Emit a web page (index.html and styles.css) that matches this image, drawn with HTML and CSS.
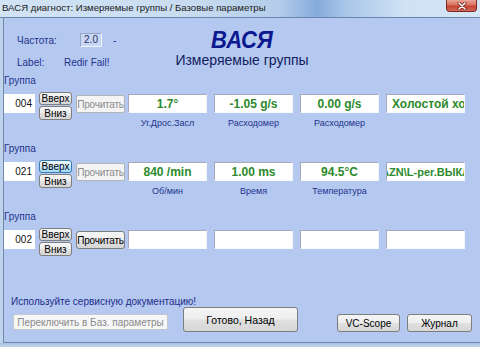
FILE: index.html
```html
<!DOCTYPE html>
<html lang="ru">
<head>
<meta charset="utf-8">
<title>ВАСЯ диагност</title>
<link rel="stylesheet" href="styles.css">
</head>
<body>
<div class="window">
  <div class="titlebar">
    <span class="title">ВАСЯ диагност: Измеряемые группы / Базовые параметры</span>
    <span class="close"><svg width="12" height="8" viewBox="0 0 12 8"><path d="M3 1 L9 7 M9 1 L3 7" stroke="#6a1a10" stroke-width="3" stroke-linecap="round"/><path d="M3 1 L9 7 M9 1 L3 7" stroke="#ffffff" stroke-width="1.6" stroke-linecap="round"/></svg></span>
  </div>
  <div class="frame">
    <div class="client">
      <header class="head">
        <div class="info">
          <div class="info-row"><span class="lbl lbl-freq">Частота:</span><span class="freq">2.0</span><span class="dash">-</span></div>
          <div class="info-row"><span class="lbl lbl-label">Label:</span><span class="lbl">Redir Fail!</span></div>
        </div>
        <div class="heading">
          <div class="brand">ВАСЯ</div>
          <div class="subtitle">Измеряемые группы</div>
        </div>
        <div class="spacer"></div>
      </header>

      <section class="group">
        <div class="group-label">Группа</div>
        <div class="group-row">
          <div class="num">004</div>
          <div class="updown">
            <div class="btn small">Вверх</div>
            <div class="btn small">Вниз</div>
          </div>
          <div class="btn read disabled">Прочитать</div>
          <div class="cells">
            <div class="cell"><div class="val">1.7°</div><div class="cap">Уг.Дрос.Засл</div></div>
            <div class="cell"><div class="val">-1.05 g/s</div><div class="cap">Расходомер</div></div>
            <div class="cell"><div class="val">0.00 g/s</div><div class="cap">Расходомер</div></div>
            <div class="cell"><div class="val val-start">Холостой ход</div><div class="cap"></div></div>
          </div>
        </div>
      </section>

      <section class="group">
        <div class="group-label">Группа</div>
        <div class="group-row">
          <div class="num">021</div>
          <div class="updown">
            <div class="btn small focus">Вверх</div>
            <div class="btn small">Вниз</div>
          </div>
          <div class="btn read disabled">Прочитать</div>
          <div class="cells">
            <div class="cell"><div class="val">840 /min</div><div class="cap">Об/мин</div></div>
            <div class="cell"><div class="val">1.00 ms</div><div class="cap">Время</div></div>
            <div class="cell"><div class="val">94.5°C</div><div class="cap">Температура</div></div>
            <div class="cell"><div class="val val-narrow">AZN\L-per.ВЫКЛ</div><div class="cap"></div></div>
          </div>
        </div>
      </section>

      <section class="group">
        <div class="group-label">Группа</div>
        <div class="group-row">
          <div class="num">002</div>
          <div class="updown">
            <div class="btn small">Вверх</div>
            <div class="btn small">Вниз</div>
          </div>
          <div class="btn read">Прочитать</div>
          <div class="cells">
            <div class="cell"><div class="val"></div><div class="cap"></div></div>
            <div class="cell"><div class="val"></div><div class="cap"></div></div>
            <div class="cell"><div class="val"></div><div class="cap"></div></div>
            <div class="cell"><div class="val"></div><div class="cap"></div></div>
          </div>
        </div>
      </section>

      <footer class="foot">
        <div class="note">Используйте сервисную документацию!</div>
        <div class="actions">
          <div class="btn switch disabled">Переключить в Баз. параметры</div>
          <div class="btn done">Готово, Назад</div>
          <div class="btn side scope">VC-Scope</div>
          <div class="btn side">Журнал</div>
        </div>
      </footer>
    </div>
  </div>
  <div class="bottom-frame"></div>
</div>
</body>
</html>
```

FILE: styles.css
```css
* { box-sizing: border-box; }

html, body {
  margin: 0;
  padding: 0;
  width: 480px;
  height: 347px;
  overflow: hidden;
  font-family: "Liberation Sans", Arial, sans-serif;
}

.window {
  width: 480px;
  height: 347px;
  display: flex;
  flex-direction: column;
  background: #bfd4ec;
}

/* title bar */
.titlebar {
  height: 18px;
  flex: none;
  display: flex;
  align-items: flex-start;
  border-bottom: 1px solid #6b86ae;
  background: linear-gradient(90deg, #d2e3f4 0%, #c8dcf1 40%, #b4cdea 58%, #86abdc 66%, #a9c6e8 72%, #cfe1f4 84%, #d6e6f6 100%);
}

.title {
  font-size: 9.6px;
  line-height: 16px;
  color: #1a1a1a;
  padding-left: 2px;
  white-space: nowrap;
}

.close {
  margin-left: auto;
  margin-right: 3px;
  width: 31px;
  height: 12px;
  border: 1px solid #7a2a20;
  border-top: none;
  border-radius: 0 0 4px 4px;
  background: linear-gradient(#e9a597 0%, #d9735f 45%, #c4432f 55%, #d4685a 100%);
  display: flex;
  align-items: center;
  justify-content: center;
}

/* frame + client */
.frame {
  flex: none;
  height: 325px;
  padding-left: 3px;
  display: flex;
}

.client {
  flex: 1;
  background: #b4c8f0;
  border-left: 1px solid #6f88ad;
  border-bottom: 1px solid #6b86ae;
  display: flex;
  flex-direction: column;
  color: #22308a;
}

.bottom-frame {
  flex: 1;
  background: linear-gradient(#a9bfdb, #c2d5ec);
}

/* header */
.head {
  height: 57px;
  flex: none;
  display: grid;
  grid-template-columns: 1fr auto 1fr;
}

.info {
  padding: 15px 0 0 13px;
  display: flex;
  flex-direction: column;
  gap: 8px;
}

.info-row {
  display: flex;
  align-items: center;
  height: 14px;
}

.lbl {
  font-size: 10px;
  color: #23338c;
  white-space: nowrap;
}

.lbl-freq { width: 63px; }
.lbl-label { width: 47px; }

.freq {
  width: 22px;
  height: 14px;
  font-size: 10px;
  line-height: 12px;
  text-align: center;
  color: #2a3466;
  background: #c8d7f3;
  border: 1px solid;
  border-color: #98a6c6 #eef3fc #eef3fc #98a6c6;
}

.dash {
  margin-left: 11px;
  font-size: 10px;
  color: #23338c;
}

.heading {
  padding-top: 10px;
  text-align: center;
}

.brand {
  font-size: 22px;
  line-height: 24px;
  font-weight: bold;
  font-style: italic;
  color: #0c1890;
  transform: scaleY(1.1);
}

.subtitle {
  font-size: 14px;
  line-height: 16px;
  color: #12205e;
}

/* groups */
.group {
  height: 68px;
  flex: none;
  display: flex;
  flex-direction: column;
}

.group-label {
  font-size: 10px;
  line-height: 12px;
  color: #23338c;
}

.group-row {
  margin-top: 5px;
  display: flex;
  align-items: flex-start;
}

.num {
  width: 31px;
  height: 19px;
  margin-top: 2px;
  background: #ffffff;
  font-size: 10px;
  line-height: 19px;
  text-align: right;
  padding-right: 3px;
  color: #111111;
}

.updown {
  margin-left: 4px;
  width: 33px;
  display: flex;
  flex-direction: column;
  gap: 1px;
}

.btn {
  display: flex;
  align-items: center;
  justify-content: center;
  white-space: nowrap;
  color: #000000;
  border: 1px solid #7e7e7e;
  border-radius: 3px;
  background: linear-gradient(#f5f5f5 0%, #eeeeee 48%, #e0e0e0 52%, #d6d6d6 100%);
}

.small {
  height: 13px;
  font-size: 10px;
  line-height: 11px;
}

.small + .small { height: 14px; }

.focus {
  border-color: #3a7bb0;
  background: linear-gradient(#eaf6fd 0%, #d9f0fc 48%, #bee6fd 52%, #a7d9f5 100%);
}

.read {
  margin-left: 4px;
  margin-top: 3px;
  width: 49px;
  height: 18px;
  font-size: 10px;
  letter-spacing: -0.2px;
}

.disabled {
  color: #8a8a8a;
  border-color: #b0b4b8;
  background: #f4f4f4;
  border-radius: 2px;
}

.cells {
  margin-left: 3px;
  display: flex;
  gap: 7px;
}

.cell {
  width: 79px;
  display: flex;
  flex-direction: column;
}

.val {
  height: 19px;
  margin-top: 2px;
  background: #ffffff;
  border: 1px solid;
  border-color: #a3abbb #f3f6fc #f8fafd #a3abbb;
  display: flex;
  align-items: center;
  justify-content: center;
  overflow: hidden;
  white-space: nowrap;
  font-size: 12px;
  font-weight: bold;
  color: #2c8a2c;
}

.val-start {
  justify-content: flex-start;
  padding-left: 5px;
}

.val-narrow {
  font-size: 11px;
}

.cap {
  margin-top: 4px;
  height: 12px;
  font-size: 9px;
  line-height: 12px;
  text-align: center;
  color: #23338c;
}

/* footer */
.foot {
  margin-top: auto;
  padding-bottom: 10px;
  display: flex;
  flex-direction: column;
}

.note {
  padding-left: 7px;
  font-size: 10px;
  line-height: 11px;
  color: #1f2d8a;
}

.actions {
  display: flex;
  align-items: flex-end;
  padding-right: 8px;
}

.switch {
  margin-left: 9px;
  margin-bottom: 2px;
  width: 155px;
  height: 16px;
  font-size: 10px;
  border-color: #c4c8cc;
  background: #f6f6f6;
}

.done {
  margin-left: 15px;
  width: 115px;
  height: 25px;
  font-size: 10.5px;
}

.side {
  width: 65px;
  height: 18px;
  font-size: 10px;
  margin-left: 7px;
}

.scope {
  margin-left: auto;
  width: 63px;
}
```
